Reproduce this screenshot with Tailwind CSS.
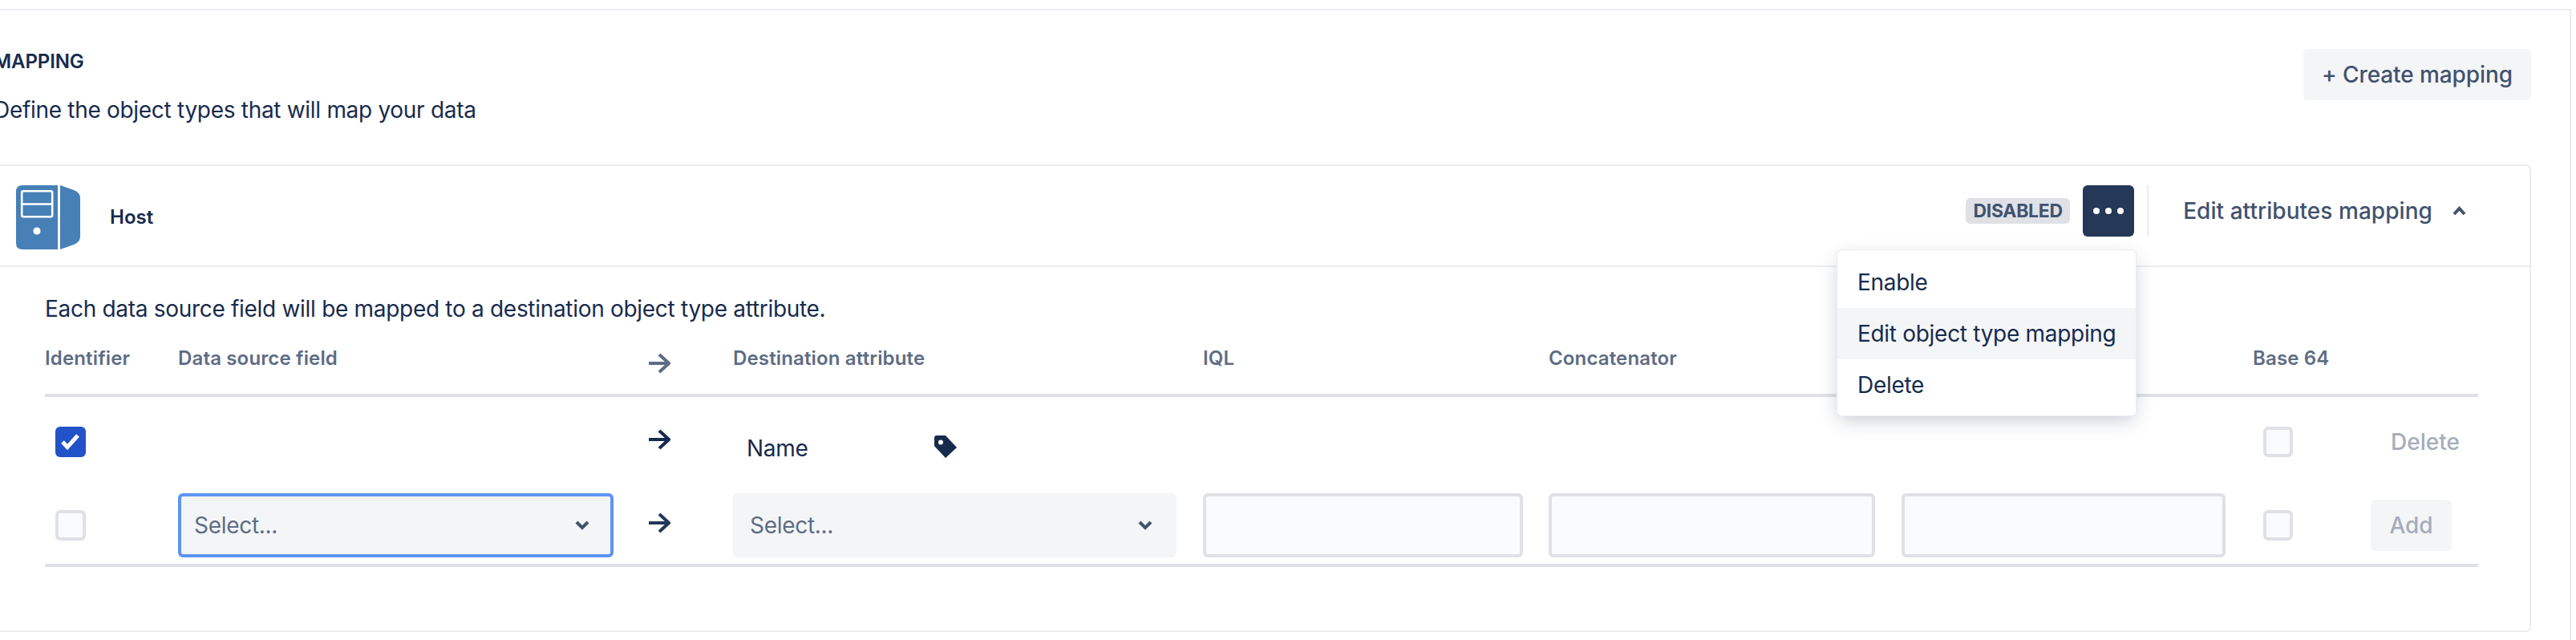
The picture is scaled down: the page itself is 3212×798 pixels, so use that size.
<!DOCTYPE html>
<html>
<head>
<meta charset="utf-8">
<script src="https://cdn.jsdelivr.net/npm/@tailwindcss/browser@4"></script>
</head>
<body class="bg-white">
<div class="relative w-[3212px] h-[798px] overflow-hidden bg-white font-['Inter',sans-serif] text-[#172b4d] text-[28px] leading-[32px] tracking-[-0.3px] pt-[11px]">
  <section class="ml-[-8px] w-[3214px] h-[787px] border-t-2 border-r-2 border-[#ebecf0] pt-[48px] pr-[48px]">
    <div class="flex justify-between items-start">
      <div>
        <h2 class="text-[24px] font-semibold tracking-[-0.1px]">MAPPING</h2>
        <p class="mt-[28px]">Define the object types that will map your data</p>
      </div>
      <button class="w-[284px] h-[64px] rounded-[6px] bg-[#f4f5f7] text-[#42526e] font-medium tracking-[-0.1px]">+ Create mapping</button>
    </div>
    <div class="mt-[52px] w-[3164px] border-2 border-[#ebecf0] rounded-[6px] h-[583px]">
      <div class="flex justify-between items-start pt-[24px] pb-[20px] pl-[26px] pr-[79px] border-b-2 border-[#ebecf0]">
        <div class="flex items-center gap-[37px] h-[80px]">
          <svg class="w-[80px] h-[80px]" viewBox="0 0 80 80">
            <path fill="#4780b7" d="M8 0H52V80H8Q0 80 0 72V8Q0 0 8 0Z"/>
            <path fill="#4780b7" d="M55 0L72 6Q80 9 80 16V64Q80 71 72 74L55 80Z"/>
            <rect x="7.2" y="7.2" width="38" height="32" rx="2" fill="none" stroke="#fff" stroke-width="2.6"/>
            <path d="M7 23.5H46" stroke="#fff" stroke-width="2.6"/>
            <circle cx="26" cy="57" r="4.6" fill="#fff"/>
          </svg>
          <span class="text-[24px] font-semibold tracking-normal">Host</span>
        </div>
        <div class="flex items-center h-[64px]">
          <span class="h-[32px] w-[130px] rounded-[6px] bg-[#dfe1e6] text-[#42526e] text-[23px] font-bold flex items-center justify-center">DISABLED</span>
          <button class="ml-[16px] w-[64px] h-[64px] rounded-[6px] bg-[#253858] flex items-center justify-center gap-[7px]">
            <i class="w-[8px] h-[8px] rounded-full bg-white"></i><i class="w-[8px] h-[8px] rounded-full bg-white"></i><i class="w-[8px] h-[8px] rounded-full bg-white"></i>
          </button>
          <div class="ml-[16px] w-[2px] h-[64px] bg-[#ebecf0]"></div>
          <span class="ml-[43px] text-[#42526e] font-medium tracking-[0.05px]">Edit attributes mapping</span>
          <svg class="ml-[25px] w-[17px] h-[12px]" viewBox="0 0 17 12"><path d="M2 10L8.500 3L15 10" fill="none" stroke="#42526e" stroke-width="4"/></svg>
        </div>
      </div>
      <div class="pt-[36px] pl-[62px] w-[3096px]">
        <p>Each data source field will be mapped to a destination object type attribute.</p>
        <div class="mt-[30px] pb-[28px] border-b-4 border-[#dfe1e6] grid grid-cols-[166px_586px_106px_586px_431px_440px_438px_147px_1fr] items-center text-[24px] font-semibold text-[#5e6c84] tracking-[0.15px]">
          <span>Identifier</span>
          <span>Data source field</span>
          <svg class="w-[28px] h-[26px] translate-y-[6px]" viewBox="0 0 28 26"><path d="M1 13H26M14 2L26 13L14 24" fill="none" stroke="#5e6c84" stroke-width="4"/></svg>
          <span>Destination attribute</span>
          <span>IQL</span>
          <span>Concatenator</span>
          <span></span>
          <span>Base 64</span>
          <span></span>
        </div>
        <div class="h-[112px] grid grid-cols-[166px_586px_106px_586px_431px_440px_438px_147px_1fr] items-center">
          <span class="ml-[13px] w-[38px] h-[38px] rounded-[6px] bg-[#2252c8] flex items-center justify-center">
            <svg class="w-[38px] h-[38px]" viewBox="0 0 38 38"><path d="M9 19L15 25.500L28 11" fill="none" stroke="#fff" stroke-width="5"/></svg>
          </span>
          <span></span>
          <svg class="w-[28px] h-[26px] -translate-y-[3px]" viewBox="0 0 28 26"><path d="M1 13H26M14 2L26 13L14 24" fill="none" stroke="#172b4d" stroke-width="4"/></svg>
          <div class="flex items-center pl-[17px] relative">
            <span class="mt-[16px]">Name</span>
            <svg class="absolute left-[250px] top-[15px] w-[30px] h-[30px]" viewBox="0 0 30 30"><path fill="#172b4d" fill-rule="evenodd" d="M4 1H15L29 16L15 29L1 14V4Q1 1 4 1ZM9 6.500A3 3 0 1 0 9 12.500A3 3 0 1 0 9 6.500Z"/></svg>
          </div>
          <span></span><span></span><span></span>
          <span class="ml-[13px] w-[37px] h-[38px] rounded-[6px] border-4 border-[#dfe1e6] bg-[#fafbfc]"></span>
          <span class="ml-[25px] text-[#a5adba] font-medium tracking-normal">Delete</span>
        </div>
        <div class="pt-[8px] pb-[8px] border-b-4 border-[#dfe1e6] grid grid-cols-[166px_586px_106px_586px_431px_440px_438px_147px_1fr] items-center">
          <span class="ml-[13px] w-[38px] h-[38px] rounded-[6px] border-4 border-[#dfe1e6] bg-[#fafbfc]"></span>
          <div class="w-[543px] h-[80px] rounded-[6px] border-4 border-[#5c94f2] bg-[#f4f5f7] flex items-center justify-between pl-[16px] pr-[26px] text-[#5e6c84]">
            <span>Select...</span>
            <svg class="w-[18px] h-[12px]" viewBox="0 0 18 12"><path d="M2 2L9 9L16 2" fill="none" stroke="#42526e" stroke-width="4"/></svg>
          </div>
          <svg class="w-[28px] h-[26px] -translate-y-[3px]" viewBox="0 0 28 26"><path d="M1 13H26M14 2L26 13L14 24" fill="none" stroke="#253858" stroke-width="4"/></svg>
          <div class="w-[553px] h-[80px] rounded-[6px] bg-[#f4f5f7] flex items-center justify-between pl-[21px] pr-[30px] text-[#5e6c84]">
            <span>Select...</span>
            <svg class="w-[18px] h-[12px]" viewBox="0 0 18 12"><path d="M2 2L9 9L16 2" fill="none" stroke="#42526e" stroke-width="4"/></svg>
          </div>
          <div class="w-[399px] h-[80px] rounded-[6px] border-4 border-[#dfe1e6] bg-[#fafbfc]"></div>
          <div class="w-[407px] h-[80px] rounded-[6px] border-4 border-[#dfe1e6] bg-[#fafbfc]"></div>
          <div class="w-[404px] h-[80px] rounded-[6px] border-4 border-[#dfe1e6] bg-[#fafbfc]"></div>
          <span class="ml-[13px] w-[37px] h-[38px] rounded-[6px] border-4 border-[#dfe1e6] bg-[#fafbfc]"></span>
          <button class="w-[101px] h-[64px] rounded-[6px] bg-[#f4f5f7] text-[#a5adba] font-medium tracking-normal">Add</button>
        </div>
      </div>
    </div>
  </section>
  <div class="absolute left-[2290px] top-[311px] w-[374px] h-[208px] py-[8px] rounded-[6px] bg-white border border-[#ebecf0] shadow-[0_8px_24px_-4px_rgba(9,30,66,0.25)]">
    <div class="h-[64px] flex items-center pl-[25px]">Enable</div>
    <div class="h-[64px] flex items-center pl-[25px] bg-[#f4f5f7]">Edit object type mapping</div>
    <div class="h-[64px] flex items-center pl-[25px]">Delete</div>
  </div>
</div>
</body>
</html>
